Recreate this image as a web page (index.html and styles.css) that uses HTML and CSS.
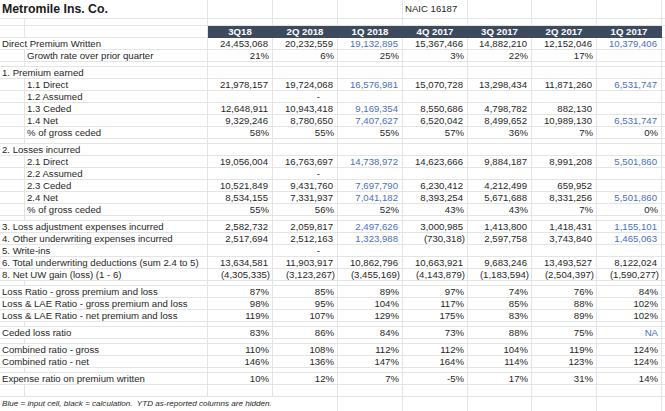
FILE: index.html
```html
<!DOCTYPE html>
<html>
<head>
<meta charset="utf-8">
<link rel="stylesheet" href="styles.css">
</head>
<body>
<div class="sheet">
  <div class="row top"><div class="c lab title">Metromile Ins. Co.</div><div class="c"></div><div class="c"></div><div class="c"></div><div class="c">NAIC 16187</div><div class="c"></div><div class="c"></div><div class="c"></div><div class="c"></div></div>
  <div class="row blank"><div class="c"></div><div class="c"></div><div class="c"></div><div class="c"></div><div class="c"></div><div class="c"></div><div class="c"></div><div class="c"></div><div class="c"></div><div class="c"></div></div>
  <div class="row hdr"><div class="c"></div><div class="c"></div><div class="c h">3Q18</div><div class="c h">2Q 2018</div><div class="c h">1Q 2018</div><div class="c h">4Q 2017</div><div class="c h">3Q 2017</div><div class="c h">2Q 2017</div><div class="c h">1Q 2017</div><div class="c"></div></div>

  <div class="row"><div class="c lab">Direct Premium Written</div><div class="c n">24,453,068</div><div class="c n">20,232,559</div><div class="c n b">19,132,895</div><div class="c n">15,367,466</div><div class="c n">14,882,210</div><div class="c n">12,152,046</div><div class="c n b">10,379,406</div><div class="c"></div></div>
  <div class="row pct"><div class="c"></div><div class="c">Growth rate over prior quarter</div><div class="c n">21%</div><div class="c n">6%</div><div class="c n">25%</div><div class="c n">3%</div><div class="c n">22%</div><div class="c n">17%</div><div class="c n"></div><div class="c"></div></div>
  <div class="row gap"><div class="c"></div><div class="c"></div><div class="c"></div><div class="c"></div><div class="c"></div><div class="c"></div><div class="c"></div><div class="c"></div><div class="c"></div><div class="c"></div></div>

  <div class="row"><div class="c lab">1. Premium earned</div><div class="c"></div><div class="c"></div><div class="c"></div><div class="c"></div><div class="c"></div><div class="c"></div><div class="c"></div><div class="c"></div></div>
  <div class="row"><div class="c"></div><div class="c">1.1 Direct</div><div class="c n">21,978,157</div><div class="c n">19,724,068</div><div class="c n b">16,576,981</div><div class="c n">15,070,728</div><div class="c n">13,298,434</div><div class="c n">11,871,260</div><div class="c n b">6,531,747</div><div class="c"></div></div>
  <div class="row"><div class="c"></div><div class="c">1.2 Assumed</div><div class="c n"></div><div class="c n dash">-</div><div class="c n"></div><div class="c n"></div><div class="c n"></div><div class="c n"></div><div class="c n"></div><div class="c"></div></div>
  <div class="row"><div class="c"></div><div class="c">1.3 Ceded</div><div class="c n">12,648,911</div><div class="c n">10,943,418</div><div class="c n b">9,169,354</div><div class="c n">8,550,686</div><div class="c n">4,798,782</div><div class="c n">882,130</div><div class="c n"></div><div class="c"></div></div>
  <div class="row"><div class="c"></div><div class="c">1.4 Net</div><div class="c n">9,329,246</div><div class="c n">8,780,650</div><div class="c n b">7,407,627</div><div class="c n">6,520,042</div><div class="c n">8,499,652</div><div class="c n">10,989,130</div><div class="c n b">6,531,747</div><div class="c"></div></div>
  <div class="row pct"><div class="c"></div><div class="c">% of gross ceded</div><div class="c n">58%</div><div class="c n">55%</div><div class="c n">55%</div><div class="c n">57%</div><div class="c n">36%</div><div class="c n">7%</div><div class="c n">0%</div><div class="c"></div></div>
  <div class="row gap"><div class="c"></div><div class="c"></div><div class="c"></div><div class="c"></div><div class="c"></div><div class="c"></div><div class="c"></div><div class="c"></div><div class="c"></div><div class="c"></div></div>

  <div class="row"><div class="c lab">2. Losses incurred</div><div class="c"></div><div class="c"></div><div class="c"></div><div class="c"></div><div class="c"></div><div class="c"></div><div class="c"></div><div class="c"></div></div>
  <div class="row"><div class="c"></div><div class="c">2.1 Direct</div><div class="c n">19,056,004</div><div class="c n">16,763,697</div><div class="c n b">14,738,972</div><div class="c n">14,623,666</div><div class="c n">9,884,187</div><div class="c n">8,991,208</div><div class="c n b">5,501,860</div><div class="c"></div></div>
  <div class="row"><div class="c"></div><div class="c">2.2 Assumed</div><div class="c n"></div><div class="c n dash">-</div><div class="c n"></div><div class="c n"></div><div class="c n"></div><div class="c n"></div><div class="c n"></div><div class="c"></div></div>
  <div class="row"><div class="c"></div><div class="c">2.3 Ceded</div><div class="c n">10,521,849</div><div class="c n">9,431,760</div><div class="c n b">7,697,790</div><div class="c n">6,230,412</div><div class="c n">4,212,499</div><div class="c n">659,952</div><div class="c n"></div><div class="c"></div></div>
  <div class="row"><div class="c"></div><div class="c">2.4 Net</div><div class="c n">8,534,155</div><div class="c n">7,331,937</div><div class="c n b">7,041,182</div><div class="c n">8,393,254</div><div class="c n">5,671,688</div><div class="c n">8,331,256</div><div class="c n b">5,501,860</div><div class="c"></div></div>
  <div class="row pct"><div class="c"></div><div class="c">% of gross ceded</div><div class="c n">55%</div><div class="c n">56%</div><div class="c n">52%</div><div class="c n">43%</div><div class="c n">43%</div><div class="c n">7%</div><div class="c n">0%</div><div class="c"></div></div>
  <div class="row gap"><div class="c"></div><div class="c"></div><div class="c"></div><div class="c"></div><div class="c"></div><div class="c"></div><div class="c"></div><div class="c"></div><div class="c"></div><div class="c"></div></div>

  <div class="row"><div class="c lab">3. Loss adjustment expenses incurred</div><div class="c n">2,582,732</div><div class="c n">2,059,817</div><div class="c n b">2,497,626</div><div class="c n">3,000,985</div><div class="c n">1,413,800</div><div class="c n">1,418,431</div><div class="c n b">1,155,101</div><div class="c"></div></div>
  <div class="row"><div class="c lab">4. Other underwriting expenses incurred</div><div class="c n">2,517,694</div><div class="c n">2,512,163</div><div class="c n b">1,323,988</div><div class="c n p">(730,318)</div><div class="c n">2,597,758</div><div class="c n">3,743,840</div><div class="c n b">1,465,063</div><div class="c"></div></div>
  <div class="row"><div class="c lab">5. Write-ins</div><div class="c n"></div><div class="c n dash">-</div><div class="c n"></div><div class="c n"></div><div class="c n"></div><div class="c n"></div><div class="c n"></div><div class="c"></div></div>
  <div class="row"><div class="c lab">6. Total underwriting deductions (sum 2.4 to 5)</div><div class="c n">13,634,581</div><div class="c n">11,903,917</div><div class="c n">10,862,796</div><div class="c n">10,663,921</div><div class="c n">9,683,246</div><div class="c n">13,493,527</div><div class="c n">8,122,024</div><div class="c"></div></div>
  <div class="row"><div class="c lab">8. Net UW gain (loss) (1 - 6)</div><div class="c n p">(4,305,335)</div><div class="c n p">(3,123,267)</div><div class="c n p">(3,455,169)</div><div class="c n p">(4,143,879)</div><div class="c n p">(1,183,594)</div><div class="c n p">(2,504,397)</div><div class="c n p">(1,590,277)</div><div class="c"></div></div>
  <div class="row gap"><div class="c"></div><div class="c"></div><div class="c"></div><div class="c"></div><div class="c"></div><div class="c"></div><div class="c"></div><div class="c"></div><div class="c"></div><div class="c"></div></div>

  <div class="row pct"><div class="c lab">Loss Ratio - gross premium and loss</div><div class="c n">87%</div><div class="c n">85%</div><div class="c n">89%</div><div class="c n">97%</div><div class="c n">74%</div><div class="c n">76%</div><div class="c n">84%</div><div class="c"></div></div>
  <div class="row pct"><div class="c lab">Loss &amp; LAE Ratio - gross premium and loss</div><div class="c n">98%</div><div class="c n">95%</div><div class="c n">104%</div><div class="c n">117%</div><div class="c n">85%</div><div class="c n">88%</div><div class="c n">102%</div><div class="c"></div></div>
  <div class="row pct"><div class="c lab">Loss &amp; LAE Ratio - net premium and loss</div><div class="c n">119%</div><div class="c n">107%</div><div class="c n">129%</div><div class="c n">175%</div><div class="c n">83%</div><div class="c n">89%</div><div class="c n">102%</div><div class="c"></div></div>
  <div class="row gap"><div class="c"></div><div class="c"></div><div class="c"></div><div class="c"></div><div class="c"></div><div class="c"></div><div class="c"></div><div class="c"></div><div class="c"></div><div class="c"></div></div>

  <div class="row pct"><div class="c lab">Ceded loss ratio</div><div class="c n">83%</div><div class="c n">86%</div><div class="c n">84%</div><div class="c n">73%</div><div class="c n">88%</div><div class="c n">75%</div><div class="c n b">NA</div><div class="c"></div></div>
  <div class="row gap"><div class="c"></div><div class="c"></div><div class="c"></div><div class="c"></div><div class="c"></div><div class="c"></div><div class="c"></div><div class="c"></div><div class="c"></div><div class="c"></div></div>

  <div class="row pct"><div class="c lab">Combined ratio - gross</div><div class="c n">110%</div><div class="c n">108%</div><div class="c n">112%</div><div class="c n">112%</div><div class="c n">104%</div><div class="c n">119%</div><div class="c n">124%</div><div class="c"></div></div>
  <div class="row pct"><div class="c lab">Combined ratio - net</div><div class="c n">146%</div><div class="c n">136%</div><div class="c n">147%</div><div class="c n">164%</div><div class="c n">114%</div><div class="c n">123%</div><div class="c n">124%</div><div class="c"></div></div>
  <div class="row gap"><div class="c"></div><div class="c"></div><div class="c"></div><div class="c"></div><div class="c"></div><div class="c"></div><div class="c"></div><div class="c"></div><div class="c"></div><div class="c"></div></div>

  <div class="row pct"><div class="c lab">Expense ratio on premium written</div><div class="c n">10%</div><div class="c n">12%</div><div class="c n">7%</div><div class="c n">-5%</div><div class="c n">17%</div><div class="c n">31%</div><div class="c n">14%</div><div class="c"></div></div>
  <div class="row"><div class="c"></div><div class="c"></div><div class="c"></div><div class="c"></div><div class="c"></div><div class="c"></div><div class="c"></div><div class="c"></div><div class="c"></div><div class="c"></div></div>
  <div class="row foot"><div class="c note">Blue = input cell, black = calculation.&nbsp; YTD as-reported columns are hidden.</div><div class="c"></div><div class="c"></div><div class="c"></div><div class="c"></div><div class="c"></div><div class="c"></div><div class="c"></div></div>
</div>
</body>
</html>
```

FILE: styles.css
```css
html, body {
  margin: 0;
  padding: 0;
  background: #ffffff;
}

.sheet {
  width: 665px;
  height: 411px;
  font-family: "Liberation Sans", Arial, sans-serif;
  font-size: 9.6px;
  color: #262626;
  overflow: hidden;
}

.row {
  display: grid;
  grid-template-columns: 25px 183px 65px 65px 65px 65px 64px 65px 65px 1fr;
  height: 12px;
}

.row.top { height: 19px; }
.row.blank { height: 7px; }
.row.gap { height: 5px; }
.row.foot { height: 14px; }

.c {
  box-sizing: border-box;
  border-right: 1px solid #e4e4e4;
  border-bottom: 1px solid #e4e4e4;
  padding: 0 2px;
  line-height: 11px;
  white-space: nowrap;
  overflow: visible;
  min-width: 0;
}

.lab {
  grid-column: span 2;
  padding-left: 2px;
}

.title {
  font-weight: bold;
  font-size: 12.3px;
  line-height: 18px;
  color: #1a1a1a;
}

.top .c {
  line-height: 18px;
}

.hdr .h {
  background: #3d4a5e;
  border-color: #3d4a5e;
  color: #ffffff;
  font-weight: bold;
  text-align: center;
}

.n {
  text-align: right;
  padding-right: 4px;
}

.pct .n { padding-right: 3px; }
.n.p { padding-right: 2px; }
.n.dash { padding-right: 17px; }

.b { color: #4a70c2; }

.note {
  grid-column: span 3;
  font-style: italic;
  font-size: 8.1px;
  line-height: 14px;
  border-right-color: transparent;
}
```
